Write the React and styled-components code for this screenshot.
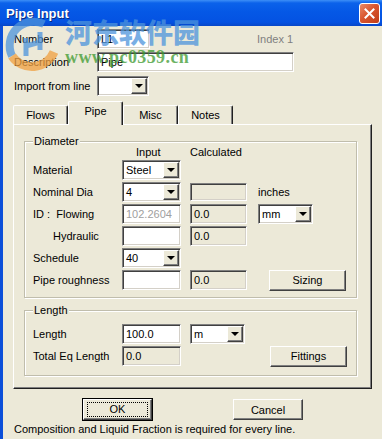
import React from 'react'
import styled, { createGlobalStyle } from 'styled-components'

const GlobalStyle = createGlobalStyle`
  html, body {
    margin: 0;
    padding: 0;
    background: #ece9d8;
  }
  body {
    font-family: "Liberation Sans", Arial, sans-serif;
    font-size: 11px;
    color: #000;
  }
`

const Window = styled.div`
  position: relative;
  width: 382px;
  height: 439px;
  display: flex;
  flex-direction: column;
  overflow: hidden;
  background: #ece9d8;
`

const TitleBar = styled.div`
  height: 26px;
  flex: none;
  display: flex;
  align-items: center;
  justify-content: space-between;
  padding: 0 2px 0 6px;
  background: linear-gradient(#3d8ff7 0, #0b62ea 3px, #0558e6 45%, #0452e2 85%, #0847c8 100%);
`

const Title = styled.span`
  color: #fff;
  font-weight: bold;
  font-size: 13px;
  text-shadow: 1px 1px 0 #0a2a80;
`

const CloseButton = styled.div`
  width: 19px;
  height: 19px;
  border: 1px solid #fff;
  border-radius: 3px;
  background: linear-gradient(135deg, #ea8a68 0%, #d9562f 45%, #c03c18 100%);
  display: grid;
  place-items: center;
`

const Body = styled.div`
  flex: 1;
  border-left: 3px solid #0b4fd9;
  padding: 0 10px;
  display: flex;
  flex-direction: column;
`

const FieldRow = styled.div`
  display: flex;
  align-items: center;
  height: 20px;
  margin-top: ${(p) => p.$top}px;
  padding-left: 1px;
`

const Label = styled.span`
  width: 83px;
  flex: none;
  white-space: nowrap;
`

const Sunken = styled.div`
  box-sizing: border-box;
  width: ${(p) => p.$w}px;
  height: ${(p) => p.$h || 20}px;
  border: 1px solid;
  border-color: #808080 #fff #fff #808080;
  box-shadow: inset 1px 1px 0 #404040, inset -1px -1px 0 #d4d0c8;
  background: ${(p) => (p.$calc ? '#ece9d8' : '#fff')};
  color: ${(p) => (p.$disabled ? '#a0a0a0' : '#000')};
  padding: 0 0 0 3px;
  display: flex;
  align-items: center;
  white-space: nowrap;
  overflow: hidden;
`

const ComboBox = styled(Sunken)`
  padding-right: 1px;
`

const ComboText = styled.span`
  flex: 1;
`

const DropButton = styled.div`
  width: 16px;
  height: 16px;
  box-sizing: border-box;
  flex: none;
  border: 1px solid;
  border-color: #fff #404040 #404040 #fff;
  box-shadow: inset -1px -1px 0 #808080;
  background: #ece9d8;
  display: grid;
  place-items: center;
  &::after {
    content: '';
    border-left: 4px solid transparent;
    border-right: 4px solid transparent;
    border-top: 4px solid #000;
  }
`

const IndexText = styled.span`
  margin-left: 107px;
  color: #7f7f7f;
`

const TabStrip = styled.div`
  display: flex;
  align-items: flex-end;
  height: 23px;
  margin-top: 5px;
  position: relative;
  z-index: 1;
`

const Tab = styled.div`
  width: 55px;
  box-sizing: border-box;
  height: ${(p) => (p.$active ? 24 : 19)}px;
  margin-bottom: ${(p) => (p.$active ? -1 : 0)}px;
  padding-top: ${(p) => (p.$active ? 3 : 3)}px;
  text-align: center;
  background: #ece9d8;
  border-top: 1px solid #fff;
  border-left: 1px solid #fff;
  border-right: 1px solid #202020;
  box-shadow: inset -1px 0 0 #808080;
  border-radius: 2px 2px 0 0;
`

const Panel = styled.div`
  width: 359px;
  height: 265px;
  box-sizing: border-box;
  border: 1px solid;
  border-color: #fff #202020 #202020 #fff;
  box-shadow: inset -1px -1px 0 #808080;
  padding: 10px 14px 0 10px;
  display: flex;
  flex-direction: column;
  gap: 6px;
`

const Group = styled.fieldset`
  margin: 0;
  padding: 0 8px ${(p) => p.$bottom}px 8px;
  border: 1px solid #c0bdac;
  box-shadow: inset 1px 1px 0 #fff, 1px 1px 0 #fff;
  min-width: 0;
`

const Legend = styled.legend`
  padding: 0 1px;
  line-height: 13px;
  background: #ece9d8;
`

const Grid = styled.div`
  display: grid;
  grid-template-columns: ${(p) => p.$cols};
  grid-auto-rows: 20px;
  row-gap: 2px;
  align-items: center;
  padding-top: ${(p) => p.$top}px;
`

const HeaderRow = styled.div`
  display: grid;
  grid-template-columns: 89px 68px 68px;
  height: 12px;
  line-height: 12px;
  margin-top: -2px;
  & > span:nth-child(2) {
    padding-left: 14px;
  }
`

const CellLabel = styled.span`
  padding-left: ${(p) => p.$indent || 0}px;
  white-space: nowrap;
`

const Button = styled.div`
  box-sizing: border-box;
  width: ${(p) => p.$w}px;
  height: 21px;
  border: 1px solid;
  border-color: #fff #404040 #404040 #fff;
  box-shadow: inset -1px -1px 0 #808080;
  background: #ece9d8;
  display: flex;
  align-items: center;
  justify-content: center;
  justify-self: ${(p) => (p.$end ? 'end' : 'start')};
`

const DefaultButton = styled(Button)`
  outline: 1px solid #000;
  & > span {
    border: 1px dotted #000;
    width: calc(100% - 6px);
    box-sizing: border-box;
    text-align: center;
    line-height: 13px;
  }
`

const ButtonRow = styled.div`
  display: flex;
  margin-top: 10px;
  padding-left: 70px;
  gap: 81px;
`

const Footer = styled.div`
  margin-top: 3px;
  padding-left: 1px;
`

const Watermark = styled.div`
  position: absolute;
  left: 4px;
  top: 16px;
  display: flex;
  gap: 3px;
  pointer-events: none;
  opacity: 0.75;
`

const MarkText = styled.div`
  display: flex;
  flex-direction: column;
`

const MarkCn = styled.span`
  font-family: "Noto Sans CJK SC", sans-serif;
  font-weight: 900;
  font-size: 27px;
  line-height: 32px;
  color: #4d94dc;
`

const MarkUrl = styled.span`
  font-family: "Liberation Serif", "Times New Roman", serif;
  font-weight: bold;
  font-size: 18px;
  line-height: 18px;
  color: #3d9a2f;
  letter-spacing: 0.4px;
`

const Combo = ({ w, text }) => (
  <ComboBox $w={w}>
    <ComboText>{text}</ComboText>
    <DropButton />
  </ComboBox>
)

export default function App() {
  return (
    <>
      <GlobalStyle />
      <Window>
        <TitleBar>
          <Title>Pipe Input</Title>
          <CloseButton>
            <svg width="11" height="11" viewBox="0 0 11 11">
              <path d="M1.5 1.5 L9.5 9.5 M9.5 1.5 L1.5 9.5" stroke="#fff" strokeWidth="2" strokeLinecap="square" />
            </svg>
          </CloseButton>
        </TitleBar>
        <Body>
          <FieldRow $top={3}>
            <Label>Number</Label>
            <Sunken $w={53}>L1</Sunken>
            <IndexText>Index 1</IndexText>
          </FieldRow>
          <FieldRow $top={3}>
            <Label>Description</Label>
            <Sunken $w={197}>Pipe</Sunken>
          </FieldRow>
          <FieldRow $top={4}>
            <Label>Import from line</Label>
            <Combo w={52} text="" />
          </FieldRow>

          <TabStrip>
            <Tab>Flows</Tab>
            <Tab $active>Pipe</Tab>
            <Tab>Misc</Tab>
            <Tab>Notes</Tab>
          </TabStrip>

          <Panel>
            <Group $bottom={7}>
              <Legend>Diameter</Legend>
              <HeaderRow>
                <span />
                <span>Input</span>
                <span>Calculated</span>
              </HeaderRow>
              <Grid $cols="89px 68px 68px 88px" $top={2}>
                <CellLabel>Material</CellLabel>
                <Combo w={59} text="Steel" />
                <span />
                <span />

                <CellLabel>Nominal Dia</CellLabel>
                <Combo w={59} text="4" />
                <Sunken $w={57} $h={18} $calc />
                <span>inches</span>

                <CellLabel>ID :&nbsp;&nbsp;Flowing</CellLabel>
                <Sunken $w={59} $disabled>102.2604</Sunken>
                <Sunken $w={57} $calc>0.0</Sunken>
                <Combo w={55} text="mm" />

                <CellLabel $indent={20}>Hydraulic</CellLabel>
                <Sunken $w={59} />
                <Sunken $w={57} $calc>0.0</Sunken>
                <span />

                <CellLabel>Schedule</CellLabel>
                <Combo w={59} text="40" />
                <span />
                <span />

                <CellLabel>Pipe roughness</CellLabel>
                <Sunken $w={59} />
                <Sunken $w={57} $calc>0.0</Sunken>
                <Button $w={77} $end>Sizing</Button>
              </Grid>
            </Group>

            <Group $bottom={9}>
              <Legend>Length</Legend>
              <Grid $cols="89px 68px 80px 77px" $top={7}>
                <CellLabel>Length</CellLabel>
                <Sunken $w={59}>100.0</Sunken>
                <Combo w={55} text="m" />
                <span />

                <CellLabel>Total Eq Length</CellLabel>
                <Sunken $w={59} $calc>0.0</Sunken>
                <span />
                <Button $w={77}>Fittings</Button>
              </Grid>
            </Group>
          </Panel>

          <ButtonRow>
            <DefaultButton $w={69}>
              <span>OK</span>
            </DefaultButton>
            <Button $w={70}>Cancel</Button>
          </ButtonRow>
          <Footer>Composition and Liquid Fraction is required for every line.</Footer>
        </Body>

        <Watermark>
          <svg width="58" height="56" viewBox="0 0 58 56">
            <path d="M8 40 A24 24 0 0 1 40 8" stroke="#4d94dc" strokeWidth="8" fill="none" />
            <path d="M8 40 A24 24 0 0 0 50 36" stroke="#f0a040" strokeWidth="9" fill="none" />
            <path d="M22 22 L22 40 M36 16 L36 34 M22 30 L36 26" stroke="#4d94dc" strokeWidth="5" fill="none" />
          </svg>
          <MarkText>
            <MarkCn>河东软件园</MarkCn>
            <MarkUrl>www.pc0359.cn</MarkUrl>
          </MarkText>
        </Watermark>
      </Window>
    </>
  )
}
